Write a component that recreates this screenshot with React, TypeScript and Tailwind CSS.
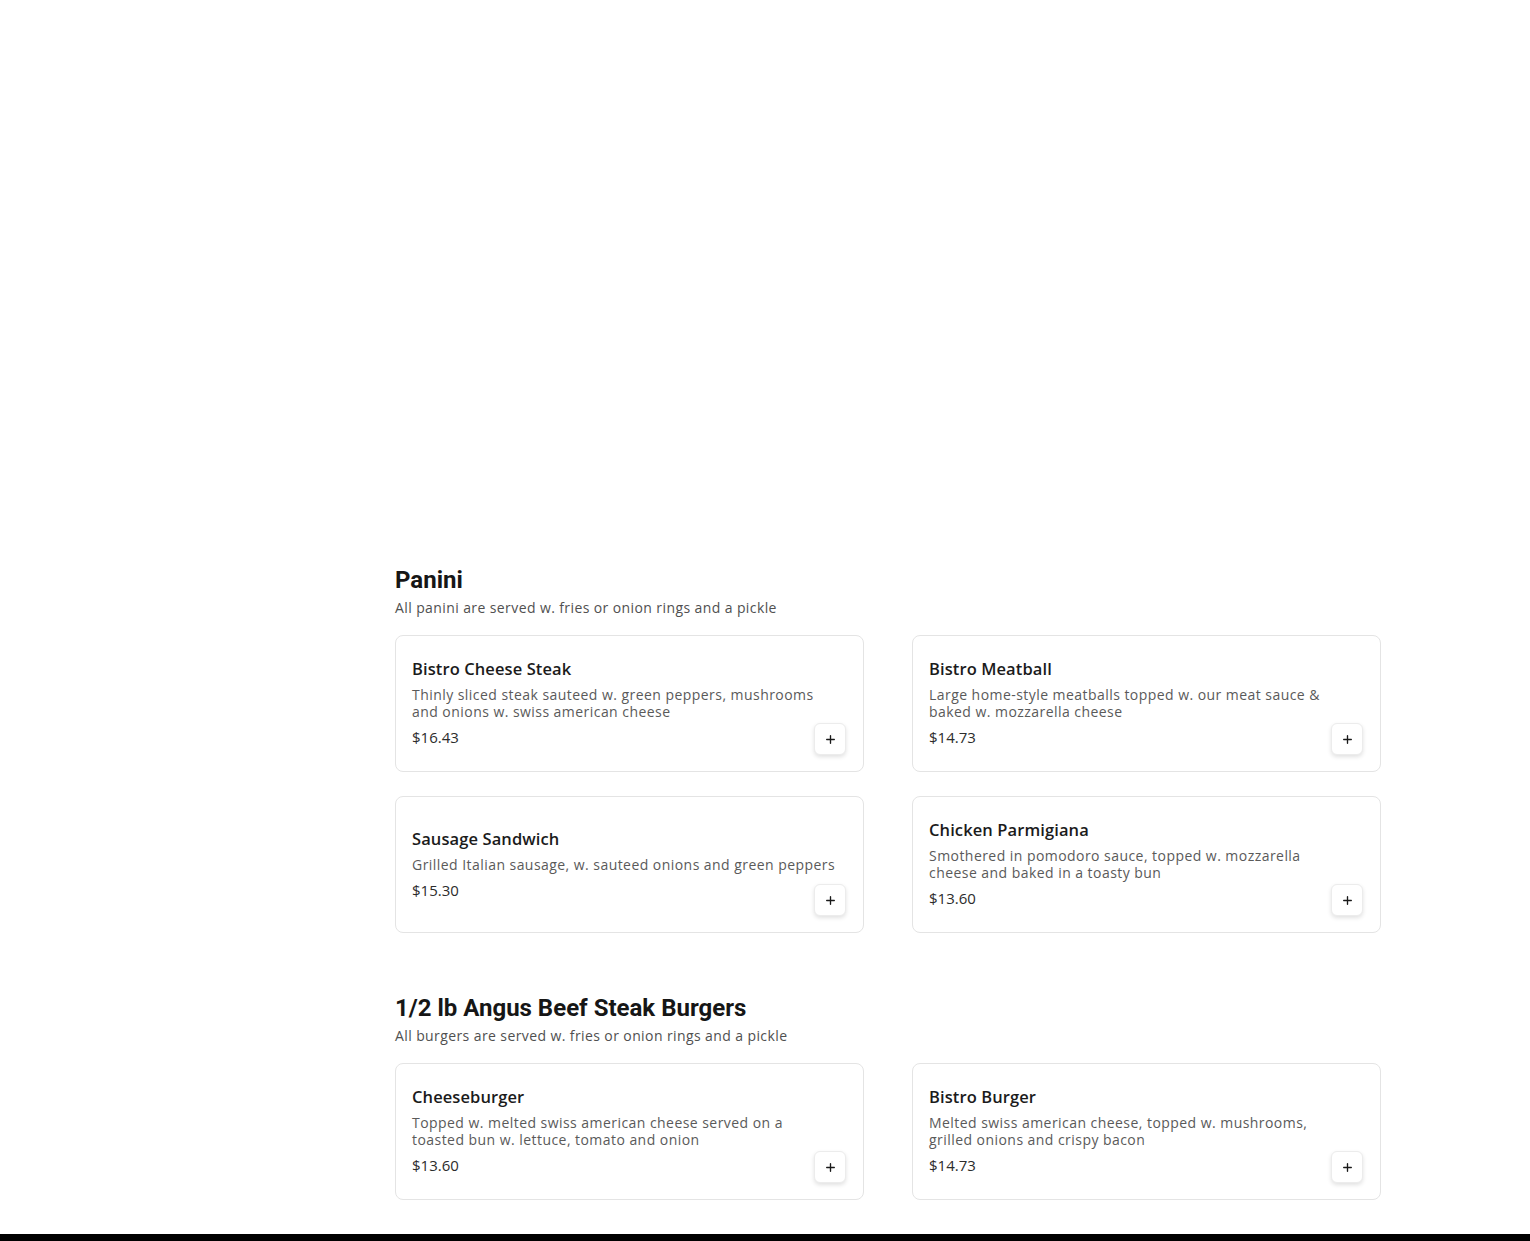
import { Plus } from "lucide-react";

interface Item {
  name: string;
  desc: string[];
  price: string;
}

interface Section {
  title: string;
  note: string;
  items: Item[];
}

// descriptions are split where the original menu wraps them
const sections: Section[] = [
  {
    title: "Panini",
    note: "All panini are served w. fries or onion rings and a pickle",
    items: [
      {
        name: "Bistro Cheese Steak",
        desc: ["Thinly sliced steak sauteed w. green peppers, mushrooms", "and onions w. swiss american cheese"],
        price: "$16.43",
      },
      {
        name: "Bistro Meatball",
        desc: ["Large home-style meatballs topped w. our meat sauce &", "baked w. mozzarella cheese"],
        price: "$14.73",
      },
      {
        name: "Sausage Sandwich",
        desc: ["Grilled Italian sausage, w. sauteed onions and green peppers"],
        price: "$15.30",
      },
      {
        name: "Chicken Parmigiana",
        desc: ["Smothered in pomodoro sauce, topped w. mozzarella", "cheese and baked in a toasty bun"],
        price: "$13.60",
      },
    ],
  },
  {
    title: "1/2 lb Angus Beef Steak Burgers",
    note: "All burgers are served w. fries or onion rings and a pickle",
    items: [
      {
        name: "Cheeseburger",
        desc: ["Topped w. melted swiss american cheese served on a", "toasted bun w. lettuce, tomato and onion"],
        price: "$13.60",
      },
      {
        name: "Bistro Burger",
        desc: ["Melted swiss american cheese, topped w. mushrooms,", "grilled onions and crispy bacon"],
        price: "$14.73",
      },
    ],
  },
];

function MenuCard({ item }: { item: Item }) {
  return (
    <div className="relative h-[137px] rounded-lg border border-[#e4e4e4] bg-white px-4 pb-[2px] flex flex-col justify-center">
      <h3 className="text-[16.5px] leading-[22px] text-[#1b1b1b] font-semibold tracking-[0.1px]">{item.name}</h3>
      <p className="mt-[6px] text-[14px] leading-[17px] text-[#5a5a5a] tracking-[0.45px]">
        {item.desc.map((line) => (
          <span key={line} className="block whitespace-nowrap">
            {line}
          </span>
        ))}
      </p>
      <div className="mt-[7px] text-[15px] leading-[20px] text-[#2c2c2c]">{item.price}</div>
      <button className="absolute right-[17px] bottom-4 w-8 h-8 flex items-center justify-center rounded-md border border-[#ececec] bg-white shadow-[0_2px_4px_rgba(0,0,0,0.12)] text-[#1a1a1a]">
        <Plus className="w-[13px] h-[13px]" strokeWidth={2.5} />
      </button>
    </div>
  );
}

export default function App() {
  return (
    <div className="min-h-screen bg-white flex flex-col" style={{ fontFamily: "'Open Sans', 'Noto Sans', sans-serif" }}>
      {/* Hero space */}
      <div className="h-[564px]" />

      <main className="w-[986px] ml-[395px] flex flex-col gap-[59px] pb-[34px]">
        {sections.map((s) => (
          <section key={s.title}>
            <h2
              className="text-[24px] leading-[32px] font-bold text-[#161616]"
              style={{ fontFamily: "Roboto, 'Liberation Sans', sans-serif" }}
            >
              {s.title}
            </h2>
            <p className="mt-[2px] text-[14px] leading-[20px] text-[#505050] tracking-[0.4px]">{s.note}</p>
            <div className="mt-[17px] grid grid-cols-2 gap-x-[48px] gap-y-[24px]">
              {s.items.map((it) => (
                <MenuCard key={it.name} item={it} />
              ))}
            </div>
          </section>
        ))}
      </main>

      <footer className="h-[200px] bg-black" />
    </div>
  );
}
